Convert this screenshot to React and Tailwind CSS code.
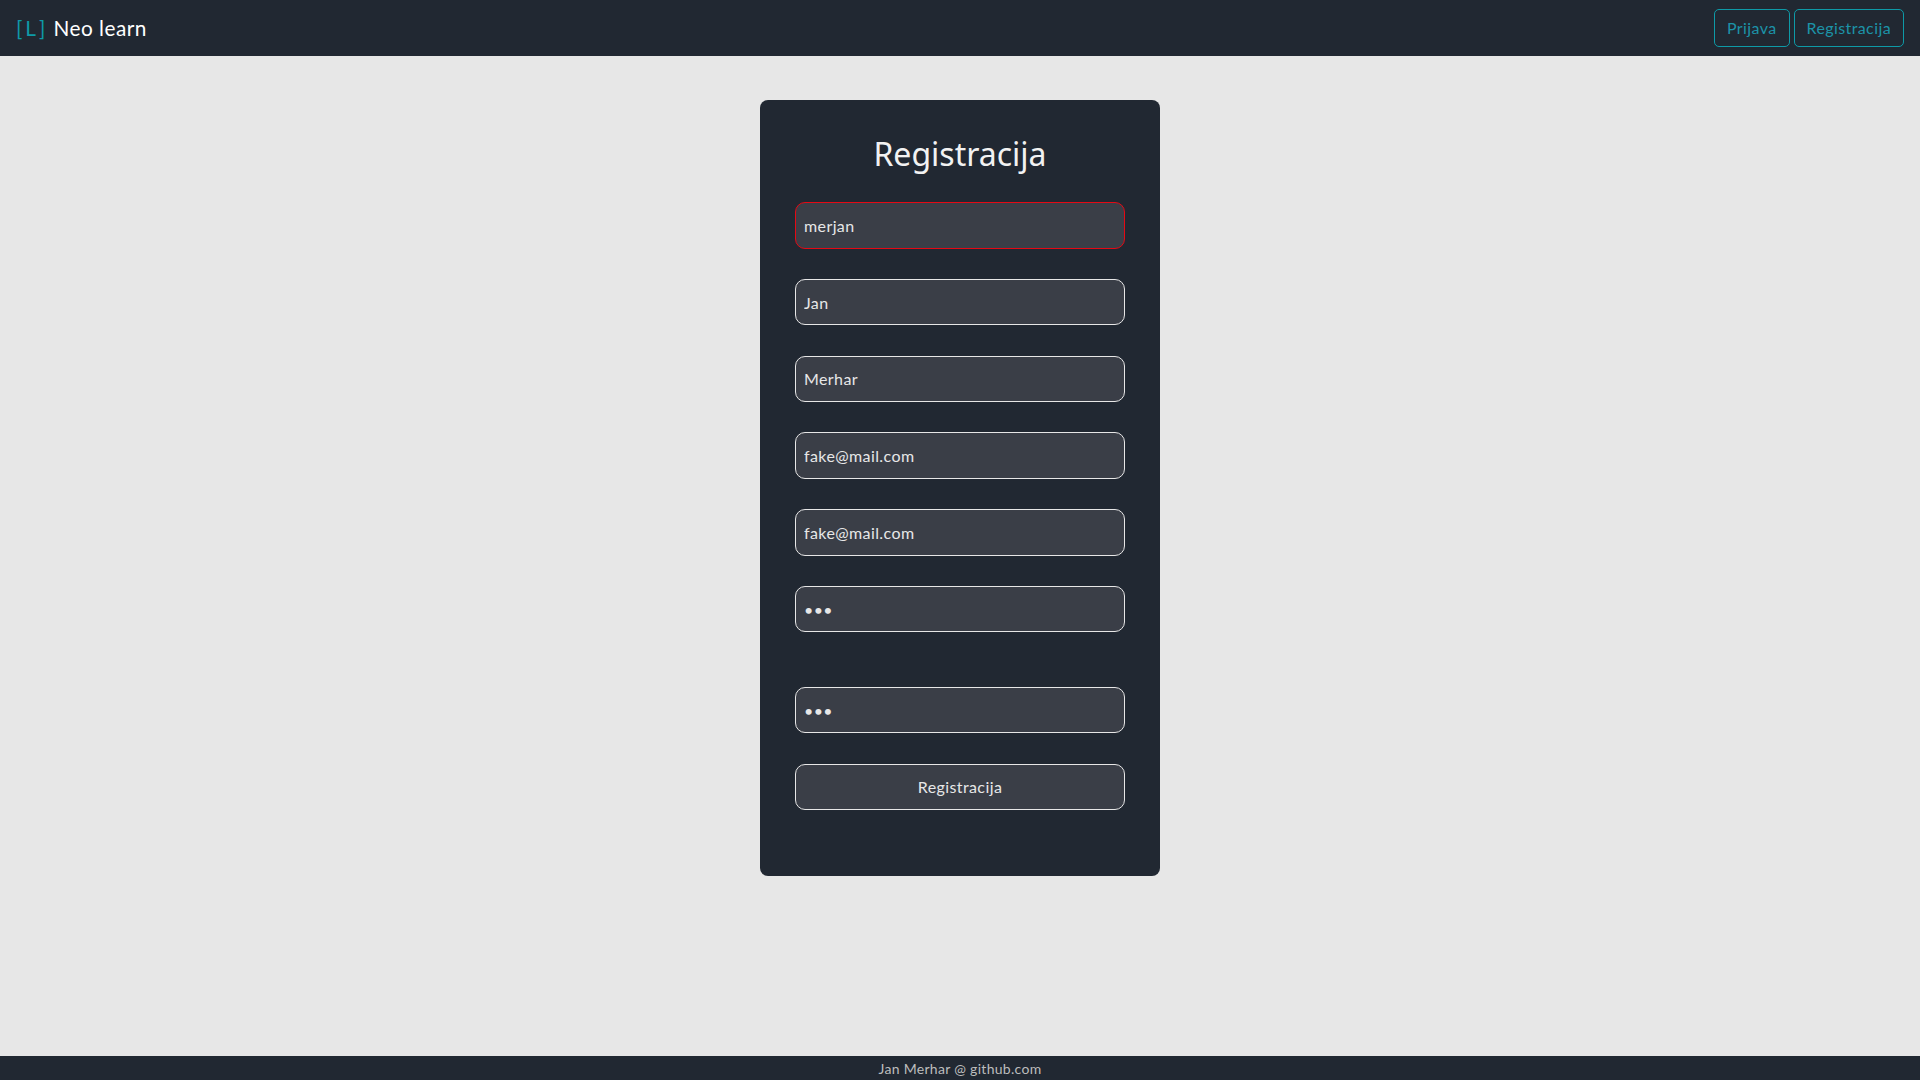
import React from "react";

const fields = [
  { value: "merjan", type: "text", error: true },
  { value: "Jan", type: "text" },
  { value: "Merhar", type: "text" },
  { value: "fake@mail.com", type: "text" },
  { value: "fake@mail.com", type: "text" },
  { value: "abc", type: "password", extra: true },
  { value: "abc", type: "password" },
];

export default function App() {
  return (
    <div className="flex min-h-screen flex-col bg-[#e7e7e7] font-['Lato','Noto_Sans',sans-serif]">
      <nav className="flex h-14 items-center justify-between bg-[#212832] pl-4 pr-4">
        <div className="flex items-center text-[20.8px] text-white">
          <span className="mr-[5px] tracking-[3px] text-[#0e9aa7]">[L]</span>
          <span className="tracking-[0.5px]">Neo learn</span>
        </div>
        <div className="flex gap-1">
          <NavButton>Prijava</NavButton>
          <NavButton>Registracija</NavButton>
        </div>
      </nav>

      <main className="flex flex-1 justify-center pt-11">
        <div className="h-[776px] w-[400px] rounded-lg bg-[#212832] px-[35px] pt-[30px]">
          <h2 className="mb-[24px] h-[48px] text-center font-['Noto_Sans',sans-serif] text-[32px] leading-[48px] text-[#f2f2f2]">
            Registracija
          </h2>
          {fields.map((f, i) => (
            <input
              key={i}
              readOnly
              type={f.type}
              value={f.value}
              className={`block h-[46.5px] w-full rounded-[10px] border bg-[#3a3e47] px-2 text-[16px] tracking-[0.4px] text-[#e7e7e7] outline-none ${
                f.error ? "border-[#e50914]" : "border-[#e7e7e7]"
              } ${f.extra ? "mb-[54.5px]" : "mb-[30.3px]"}`}
            />
          ))}
          <button className="block h-[46.5px] w-full rounded-[10px] border border-[#e7e7e7] bg-[#3a3e47] text-[16px] tracking-[0.4px] text-[#e7e7e7]">
            Registracija
          </button>
        </div>
      </main>

      <footer className="flex h-6 items-center justify-center bg-[#212832] text-[14px] tracking-[0.3px] text-[#bdbdbd]">
        Jan Merhar @ github.com
      </footer>
    </div>
  );
}

function NavButton({ children }) {
  return (
    <button className="h-[38px] rounded-[5px] border border-[#0e9aa7] px-3 text-[16px] tracking-[0.4px] text-[#1c93a8]">
      {children}
    </button>
  );
}
